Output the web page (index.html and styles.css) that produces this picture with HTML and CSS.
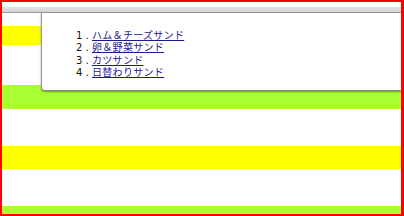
FILE: index.html
```html
<!DOCTYPE html>
<html lang="ja">
<head>
<meta charset="utf-8">
<link rel="stylesheet" href="styles.css">
</head>
<body>
<div class="frame">
  <div class="topgap"></div>
  <div class="toolbar"></div>
  <div class="stripes">
    <div class="s white s1"></div>
    <div class="s yellow s2"></div>
    <div class="s white s3"></div>
    <div class="s green s4"></div>
    <div class="s white s5"></div>
    <div class="s yellow s6"></div>
    <div class="s white s7"></div>
    <div class="s green s8"></div>
  </div>
  <div class="popup">
    <ol class="menu">
      <li><a href="#">ハム＆チーズサンド</a></li>
      <li><a href="#">卵＆野菜サンド</a></li>
      <li><a href="#">カツサンド</a></li>
      <li><a href="#">日替わりサンド</a></li>
    </ol>
  </div>
</div>
</body>
</html>
```
FILE: styles.css
```css
html, body {
  margin: 0;
  padding: 0;
  background: #fff;
}
.frame {
  position: relative;
  width: 404px;
  height: 216px;
  box-sizing: border-box;
  border: 2px solid #f00;
  border-right-width: 3px;
  display: flex;
  flex-direction: column;
  overflow: hidden;
  font-family: "Noto Sans CJK JP", "Noto Sans", sans-serif;
}
.topgap {
  flex-shrink: 0;
  height: 5px;
  background: #fff;
}
.toolbar {
  flex-shrink: 0;
  height: 5px;
  background: linear-gradient(#e4e4e4, #d4d4d4);
  border-bottom: 1px solid #9a9a9a;
}
.stripes {
  flex-shrink: 0;
  display: flex;
  flex-direction: column;
}
.s { flex-shrink: 0; }
.white { background: #fff; }
.yellow { background: #ffff00; }
.green { background: #aaff33; }
.s1 { height: 13px; }
.s2 { height: 19px; }
.s3 { height: 40px; }
.s4 { height: 24px; }
.s5 { height: 37px; }
.s6 { height: 23px; }
.s7 { height: 37px; }
.s8 { height: 10px; }
.popup {
  position: absolute;
  top: 11px;
  left: 39px;
  right: 0;
  height: 77px;
  background: #fff;
  border-left: 1px solid #9a9a9a;
  border-bottom: 1px solid #8a8a8a;
  border-bottom-left-radius: 4px;
  box-shadow: 0 1px 2px rgba(40, 80, 0, 0.55);
}
.menu {
  list-style: none;
  margin: 0;
  padding: 16px 0 0 34px;
  counter-reset: item;
  font-size: 10px;
  line-height: 12.4px;
  color: #111;
}
.menu li {
  counter-increment: item;
  white-space: nowrap;
  height: 12.4px;
}
.menu li::before {
  content: counter(item) ".";
  display: inline-block;
  width: 16px;
  letter-spacing: 3px;
  font-family: "DejaVu Sans", sans-serif;
  font-size: 10px;
}
.menu a {
  color: #1a1a8c;
  text-decoration: underline;
  letter-spacing: 0.3px;
}
```
